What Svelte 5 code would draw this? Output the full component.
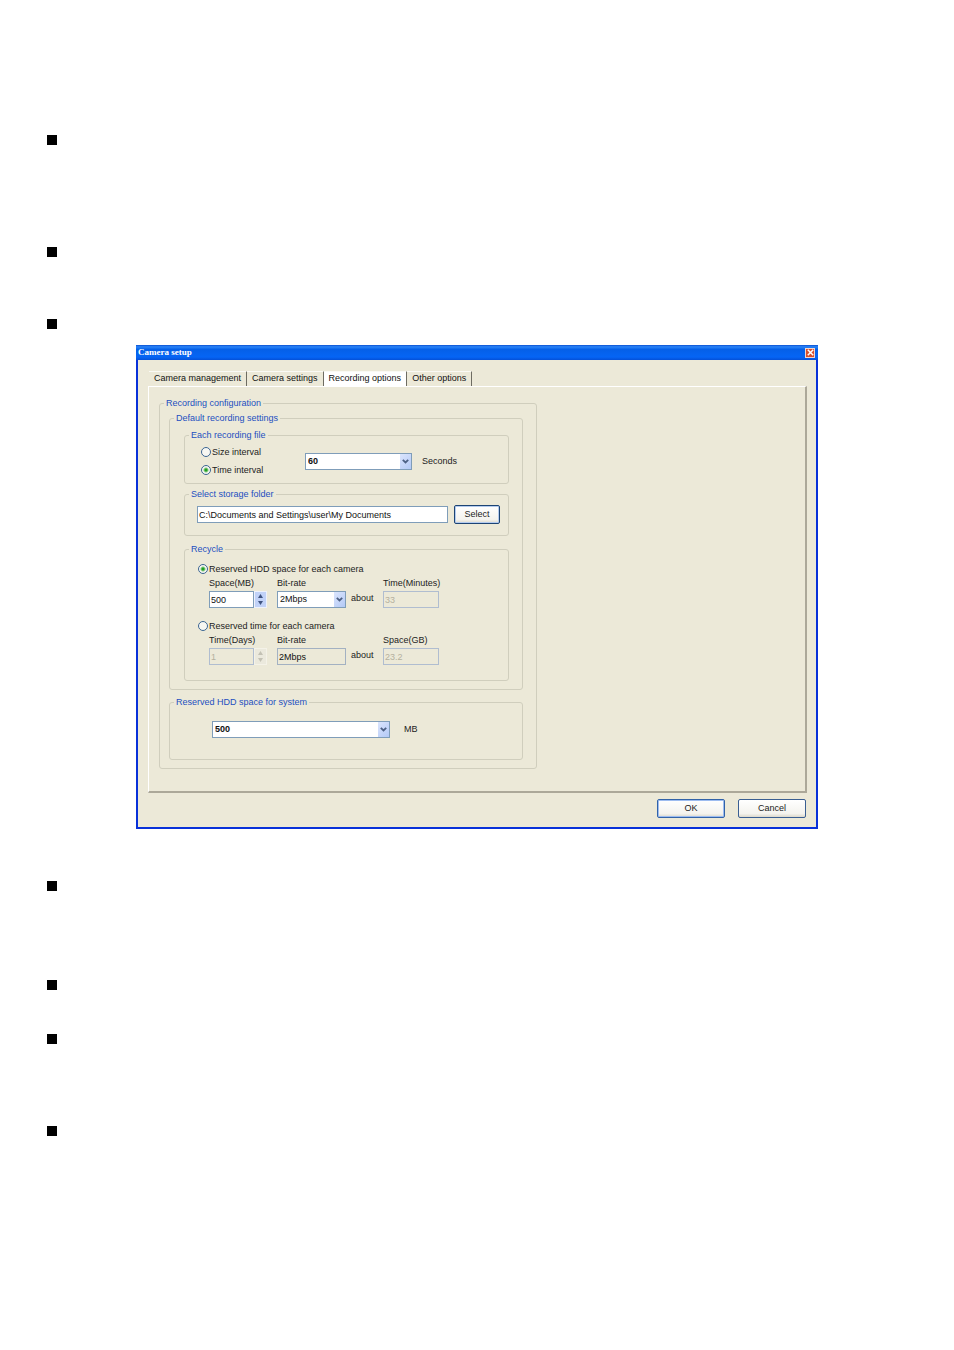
<script lang="ts">
  const tabs = ['Camera management', 'Camera settings', 'Recording options', 'Other options'];

  // Space each list item takes up, in pixels
  const before = [112, 72, 26];
  const after = [99, 54, 92, 100];

  let activeTab = $state('Recording options');
  let interval = $state('time');
  let recycle = $state('space');
  let duration = $state('60');
  let folder = $state('C:\\Documents and Settings\\user\\My Documents');
  let space = $state(500);
  let days = $state(1);
  let bitrate = $state('2Mbps');
  let systemSpace = $state('500');
</script>

{#snippet bullets(items: number[])}
  <ul class="bullets">
    {#each items as height}
      <li style="min-height: {height}px"></li>
    {/each}
  </ul>
{/snippet}

{#snippet arrow()}
  <span class="arrow">
    <svg viewBox="0 0 7 5" width="7" height="5" aria-hidden="true">
      <path d="M0.8 0.8 L3.5 3.4 L6.2 0.8" fill="none" stroke="#4d6185" stroke-width="1.8" />
    </svg>
  </span>
{/snippet}

{#snippet spinButtons(disabled: boolean, step: (by: number) => void)}
  <span class="spin" class:disabled>
    <button type="button" aria-label="Increase" {disabled} onclick={() => step(1)}>
      <svg viewBox="0 0 5 4" width="5" height="4"><path d="M0 4 L2.5 0 L5 4 Z" fill="currentColor" /></svg>
    </button>
    <button type="button" aria-label="Decrease" {disabled} onclick={() => step(-1)}>
      <svg viewBox="0 0 5 4" width="5" height="4"><path d="M0 0 L2.5 4 L5 0 Z" fill="currentColor" /></svg>
    </button>
  </span>
{/snippet}

<main class="page">
  {@render bullets(before)}

  <section class="window" aria-label="Camera setup">
    <header class="titlebar">
      <span class="title">Camera setup</span>
      <button class="close" type="button" aria-label="Close">
        <svg viewBox="0 0 7 7" width="7" height="7">
          <path d="M0.8 0.8 L6.2 6.2 M6.2 0.8 L0.8 6.2" stroke="#fff" stroke-width="1.5" />
        </svg>
      </button>
    </header>

    <div class="body">
      <div class="tabs" role="tablist">
        {#each tabs as tab}
          <button
            class="tab"
            class:active={tab === activeTab}
            type="button"
            role="tab"
            aria-selected={tab === activeTab}
            onclick={() => (activeTab = tab)}>{tab}</button>
        {/each}
      </div>

      <div class="panel" role="tabpanel">
        <fieldset class="config">
          <legend>Recording configuration</legend>

          <fieldset class="defaults">
            <legend>Default recording settings</legend>

            <fieldset class="file">
              <legend>Each recording file</legend>
              <div class="radios">
                <label><input type="radio" name="interval" value="size" bind:group={interval} />Size interval</label>
                <label><input type="radio" name="interval" value="time" bind:group={interval} />Time interval</label>
              </div>
              <div class="combo duration">
                <select id="duration" class="bold" bind:value={duration}>
                  <option>30</option>
                  <option>60</option>
                  <option>120</option>
                </select>
                {@render arrow()}
              </div>
              <label class="unit" for="duration">Seconds</label>
            </fieldset>

            <fieldset class="folder">
              <legend>Select storage folder</legend>
              <input class="box" type="text" aria-label="Storage folder" bind:value={folder} />
              <button class="btn select-btn" type="button">Select</button>
            </fieldset>

            <fieldset class="recycle">
              <legend>Recycle</legend>

              <label class="choice">
                <input type="radio" name="recycle" value="space" bind:group={recycle} />Reserved HDD space for each camera
              </label>
              <div class="fields">
                <div class="field amount">
                  <label for="space">Space(MB)</label>
                  <div class="spinner">
                    <input id="space" class="box" type="number" disabled={recycle !== 'space'} bind:value={space} />
                    {@render spinButtons(recycle !== 'space', (by) => (space += by))}
                  </div>
                </div>
                <div class="field rate">
                  <label for="rate">Bit-rate</label>
                  <div class="combo">
                    <select id="rate" bind:value={bitrate}>
                      <option>1Mbps</option>
                      <option>2Mbps</option>
                      <option>4Mbps</option>
                    </select>
                    {@render arrow()}
                  </div>
                </div>
                <span class="about">about</span>
                <div class="field result">
                  <label for="minutes">Time(Minutes)</label>
                  <input id="minutes" class="box" type="text" value="33" disabled />
                </div>
              </div>

              <label class="choice second">
                <input type="radio" name="recycle" value="time" bind:group={recycle} />Reserved time for each camera
              </label>
              <div class="fields">
                <div class="field amount">
                  <label for="days">Time(Days)</label>
                  <div class="spinner">
                    <input id="days" class="box" type="number" disabled={recycle !== 'time'} bind:value={days} />
                    {@render spinButtons(recycle !== 'time', (by) => (days += by))}
                  </div>
                </div>
                <div class="field rate">
                  <label for="rate-fixed">Bit-rate</label>
                  <input id="rate-fixed" class="box readonly" type="text" value={bitrate} readonly />
                </div>
                <span class="about">about</span>
                <div class="field result">
                  <label for="gigabytes">Space(GB)</label>
                  <input id="gigabytes" class="box" type="text" value="23.2" disabled />
                </div>
              </div>
            </fieldset>
          </fieldset>

          <fieldset class="system">
            <legend>Reserved HDD space for system</legend>
            <div class="combo">
              <select id="system-space" class="bold" bind:value={systemSpace}>
                <option>500</option>
                <option>1000</option>
              </select>
              {@render arrow()}
            </div>
            <label for="system-space">MB</label>
          </fieldset>
        </fieldset>
      </div>

      <footer class="actions">
        <button class="btn primary" type="button">OK</button>
        <button class="btn" type="button">Cancel</button>
      </footer>
    </div>
  </section>

  {@render bullets(after)}
</main>

<style>
  :global(body) {
    margin: 0;
    background: #fff;
  }

  .page,
  .page * {
    box-sizing: border-box;
  }

  .page {
    padding-top: 135px;
    font: 9px/13px 'Liberation Sans', Arial, sans-serif;
    color: #222;
  }

  .bullets {
    margin: 0;
    padding: 0 47px;
    list-style: none;
  }

  .bullets li::before {
    content: '';
    display: block;
    width: 10px;
    height: 10px;
    background: #000;
  }

  .window {
    margin: 0 136px 52px;
    background: #0831d9;
    padding: 0 2px 2px;
  }

  .titlebar {
    display: flex;
    align-items: center;
    justify-content: space-between;
    height: 15px;
    margin: 0 -2px;
    padding: 0 3px 0 2px;
    background: linear-gradient(#0a4fd0, #2a84f8 12%, #0560e8 30%, #0565f5 80%, #0450d8);
  }

  .title {
    font: bold 9px/15px 'Liberation Serif', serif;
    color: #fff;
  }

  .close {
    display: grid;
    place-items: center;
    width: 10px;
    height: 10px;
    padding: 0;
    border: 1px solid #f3d5cc;
    background: #d9502c;
  }

  .body {
    padding: 11px 9px 9px 10px;
    background: #ece9d8;
  }

  .tabs {
    display: flex;
    height: 15px;
    padding-left: 1px;
  }

  .tab {
    padding: 0 5px 2px;
    border: 0;
    border-top: 1px solid #fafaf5;
    border-right: 1px solid #6e6c62;
    background: none;
    font: inherit;
    color: #111;
    white-space: nowrap;
  }

  .tab.active {
    background: #fff;
  }

  .panel {
    padding: 10px 10px 22px;
    border: solid;
    border-width: 1px 2px 2px 1px;
    border-color: #fff #aca899 #aca899 #fff;
  }

  fieldset {
    min-width: 0;
    margin: 0;
    border: 1px solid #d0cebd;
    border-radius: 3px;
  }

  legend {
    padding: 0 2px;
    color: #1c4fc0;
  }

  .config {
    max-width: 378px;
    padding: 2px 13px 8px 9px;
  }

  .defaults {
    padding: 4px 13px 8px 14px;
  }

  .config > legend {
    margin-left: -5px;
  }

  .defaults > legend {
    margin-left: -10px;
  }

  .file {
    display: flex;
    align-items: center;
    padding: 1px 16px 4px;
  }

  .file > legend {
    margin-left: -12px;
  }

  .radios {
    width: 104px;
  }

  .radios label {
    display: flex;
    align-items: center;
    gap: 1px;
    height: 18px;
  }

  .unit {
    margin-left: 10px;
  }

  input[type='radio'] {
    flex: none;
    width: 10px;
    height: 10px;
    margin: 0;
    border: 1px solid #3b6592;
    border-radius: 50%;
    background: #f7f7f2;
    appearance: none;
  }

  input[type='radio']:checked {
    background: radial-gradient(circle, #21a121 0 1px, #f7f7f2 3px);
  }

  .combo {
    position: relative;
  }

  .duration {
    width: 107px;
  }

  select,
  .box {
    display: block;
    width: 100%;
    height: 17px;
    margin: 0;
    padding: 0 1px;
    border: 1px solid #7f9db9;
    border-radius: 0;
    background: #fff;
    font: inherit;
    color: #111;
    appearance: none;
  }

  select {
    padding: 0 14px 0 2px;
  }

  select.bold {
    font-weight: bold;
  }

  .arrow {
    position: absolute;
    top: 1px;
    right: 1px;
    bottom: 1px;
    display: grid;
    place-items: center;
    width: 11px;
    background: linear-gradient(135deg, #dbe5fd, #b3c9f6);
    pointer-events: none;
  }

  .box:disabled {
    border-color: #b0bdd0;
    background: #ece9d8;
    color: #b5b19f;
  }

  .box.readonly {
    border-color: #a3b1c2;
    background: #ece9d8;
  }

  .folder {
    display: flex;
    align-items: center;
    gap: 6px;
    margin-top: 4px;
    padding: 4px 8px 11px 12px;
  }

  .folder > legend {
    margin-left: -8px;
  }

  .btn {
    width: 68px;
    height: 19px;
    padding: 0;
    border: 1px solid #3a5f92;
    border-radius: 2px;
    background: linear-gradient(#fff, #f4f3ee 80%, #dcd8cb);
    font: inherit;
    color: #222;
  }

  .select-btn {
    flex: none;
    width: 46px;
    border-color: #1d4474;
    box-shadow: inset 0 0 0 1px #b4cbee;
  }

  .primary {
    border-color: #3263a8;
    box-shadow: inset 0 0 0 1px #9dbcf0;
  }

  .recycle {
    margin-top: 7px;
    padding: 6px 12px 15px 13px;
  }

  .recycle > legend {
    margin-left: -9px;
  }

  .choice {
    display: flex;
    align-items: center;
    gap: 1px;
    height: 14px;
  }

  .second {
    margin-top: 11px;
  }

  .fields {
    display: flex;
    align-items: flex-end;
    padding: 1px 0 0 11px;
  }

  .field label {
    display: block;
    height: 14px;
  }

  .amount {
    width: 58px;
  }

  .rate {
    width: 69px;
    margin-left: 10px;
  }

  .about {
    width: 32px;
    margin-left: 5px;
    line-height: 19px;
  }

  .result {
    width: 56px;
  }

  .result label {
    white-space: nowrap;
  }

  .spinner {
    display: flex;
  }

  .spinner .box {
    width: 45px;
    appearance: textfield;
  }

  .spinner .box::-webkit-inner-spin-button {
    display: none;
  }

  .spin {
    display: flex;
    flex-direction: column;
    width: 13px;
    height: 17px;
    border: 1px solid #eef2fc;
    background: #c1d2f8;
    color: #3f5380;
  }

  .spin.disabled {
    border-color: #f4f2e8;
    background: #ebe9dd;
    color: #c3c1b4;
  }

  .spin button {
    display: grid;
    flex: 1;
    place-items: center;
    min-height: 0;
    padding: 0;
    border: 0;
    background: none;
    color: inherit;
  }

  .system {
    display: flex;
    align-items: center;
    gap: 14px;
    margin-top: 6px;
    padding: 12px 42px 21px;
  }

  .system > legend {
    margin-left: -38px;
  }

  .system .combo {
    width: 178px;
  }

  .actions {
    display: flex;
    justify-content: flex-end;
    gap: 13px;
    padding: 6px 1px 0 0;
  }
</style>
